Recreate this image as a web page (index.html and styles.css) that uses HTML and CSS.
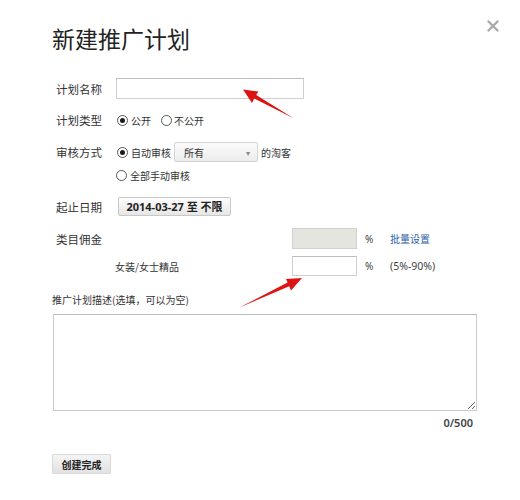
FILE: index.html
```html
<!DOCTYPE html>
<html lang="zh-CN">
<head>
<meta charset="utf-8">
<title>新建推广计划</title>
<link rel="stylesheet" href="styles.css">
</head>
<body>
<div class="dialog">
  <h1 class="title">新建推广计划</h1>
  <button class="close" type="button" aria-label="关闭">
    <svg width="12" height="12" viewBox="0 0 12 12"><path d="M1.5 1.5 L10.5 10.5 M10.5 1.5 L1.5 10.5" stroke="#a9a9a9" stroke-width="2.4" stroke-linecap="round"/></svg>
  </button>

  <div class="form">
    <div class="row row-name">
      <span class="label">计划名称</span>
      <input class="text-input name-input" type="text">
    </div>

    <div class="row row-type">
      <span class="label">计划类型</span>
      <span class="radio checked"></span><span class="opt">公开</span>
      <span class="radio second"></span><span class="opt opt-tight">不公开</span>
    </div>

    <div class="row row-audit">
      <span class="label">审核方式</span>
      <span class="radio checked"></span><span class="opt">自动审核</span>
      <span class="select"><span>所有</span><span class="caret">▾</span></span>
      <span class="opt after-select">的淘客</span>
    </div>
    <div class="row row-manual">
      <span class="radio"></span><span class="opt">全部手动审核</span>
    </div>

    <div class="row row-date">
      <span class="label">起止日期</span>
      <button class="date-btn" type="button">2014-03-27 至 不限</button>
    </div>

    <div class="cat-grid">
      <span class="label">类目佣金</span>
      <input class="text-input pct-input disabled" type="text" disabled>
      <span class="pct">%</span>
      <a class="link" href="#">批量设置</a>

      <span class="sub-label">女装/女士精品</span>
      <input class="text-input pct-input" type="text">
      <span class="pct">%</span>
      <span class="range">(5%-90%)</span>
    </div>
  </div>

  <div class="desc-label">推广计划描述(选填，可以为空)</div>
  <textarea class="desc"></textarea>
  <div class="counter">0/500</div>

  <button class="create-btn" type="button">创建完成</button>

  <svg class="arrows" width="520" height="500" viewBox="0 0 520 500">
    <polygon points="243,89.5 258.5,91.5 256.2,95.1 294,118.5 254.2,98.5 252,103" fill="#dd1414"/>
    <polygon points="302,278 286,279 287.6,282.6 239.5,307.5 289.2,286.2 291,290.5" fill="#dd1414"/>
  </svg>
</div>
</body>
</html>
```

FILE: styles.css
```css
* { box-sizing: border-box; }

body {
  margin: 0;
  background: #ffffff;
  font-family: "Noto Sans", "Noto Sans CJK SC", sans-serif;
  color: #333333;
}

.dialog {
  position: relative;
  width: 520px;
  height: 500px;
  padding: 26px 0 0 52px;
  display: flex;
  flex-direction: column;
  align-items: flex-start;
}

.title {
  margin: 0;
  font-family: "Noto Sans CJK SC", sans-serif;
  font-size: 23px;
  line-height: 24px;
  font-weight: 400;
  color: #222222;
}

.close {
  position: absolute;
  top: 20px;
  right: 21px;
  width: 12px;
  height: 12px;
  padding: 0;
  border: 0;
  background: none;
  display: flex;
}

.form {
  margin-left: 4px;
  display: flex;
  flex-direction: column;
}

.row {
  display: flex;
  align-items: center;
}

.label {
  width: 60px;
  flex: 0 0 60px;
  font-family: "Noto Sans CJK SC", sans-serif;
  font-size: 11.5px;
  color: #333333;
}

.opt {
  font-family: "Noto Sans CJK SC", sans-serif;
  font-size: 10px;
  color: #333333;
  margin-left: 3px;
}

.opt-tight { margin-left: 2px; }

.row-name { margin-top: 28px; height: 21px; }
.row-type { margin-top: 11px; height: 20px; }
.row-audit { margin-top: 12px; height: 20px; }
.row-manual { margin-top: 5px; height: 16px; padding-left: 60px; }
.row-date { margin-top: 14px; height: 19px; }

.text-input {
  height: 21px;
  border: 1px solid #cfcfcf;
  border-top-color: #bdbdbd;
  background: #ffffff;
  padding: 0 4px;
  font-size: 11px;
}

.name-input { width: 188px; }

.radio {
  position: relative;
  width: 11px;
  height: 11px;
  margin-left: 1px;
  border: 1px solid #555555;
  border-radius: 50%;
  background: #ffffff;
  flex: 0 0 11px;
}

.radio.second { margin-left: 10px; }
.row-manual .radio { margin-left: 0; }

.radio.checked::after {
  content: "";
  position: absolute;
  left: 2px;
  top: 2px;
  width: 5px;
  height: 5px;
  border-radius: 50%;
  background: #1a1a1a;
}

.select {
  width: 84px;
  height: 20px;
  margin-left: 3px;
  padding: 0 7px 0 9px;
  border: 1px solid #d4d4d4;
  border-radius: 2px;
  background: linear-gradient(#fbfbfb, #ececec);
  display: flex;
  align-items: center;
  justify-content: space-between;
  font-family: "Noto Sans CJK SC", sans-serif;
  font-size: 10px;
  color: #333333;
}

.caret {
  font-size: 8px;
  color: #888888;
}

.after-select { margin-left: 3px; }

.date-btn {
  width: 113px;
  height: 19px;
  margin-left: 2px;
  padding: 0;
  border: 1px solid #c8c8c8;
  border-radius: 2px;
  background: linear-gradient(#fdfdfd, #e6e6e6);
  font-family: "Noto Sans", "Noto Sans CJK SC", sans-serif;
  font-size: 11px;
  font-weight: 700;
  color: #222222;
  line-height: 17px;
}

.cat-grid {
  margin-top: 12px;
  display: grid;
  grid-template-columns: 60px 176px 65px 33px auto;
  grid-template-rows: 21px 20px;
  row-gap: 7px;
  align-items: center;
}

.cat-grid .label { grid-column: 1; }
.cat-grid .pct-input { grid-column: 3; width: 65px; height: 100%; }
.cat-grid .sub-label {
  grid-column: 2;
  margin-left: -1px;
  font-family: "Noto Sans CJK SC", sans-serif;
  font-size: 10px;
  color: #333333;
}

.pct-input.disabled {
  background: #e5e5df;
  border-color: #d2d2cc;
}

.pct {
  padding-left: 8px;
  font-size: 10px;
  color: #444444;
}

.link {
  font-family: "Noto Sans CJK SC", sans-serif;
  font-size: 10px;
  color: #2c62a8;
  text-decoration: none;
}

.range {
  font-size: 10.5px;
  color: #444444;
}

.desc-label {
  margin-top: 16px;
  height: 16px;
  line-height: 16px;
  font-family: "Noto Sans CJK SC", sans-serif;
  font-size: 10px;
  color: #333333;
}

.desc {
  margin: 6px 0 0 1px;
  width: 424px;
  height: 97px;
  border: 1px solid #cccccc;
  border-top-color: #bcbcbc;
  resize: both;
  display: block;
}

.counter {
  margin-top: 4px;
  width: 421px;
  height: 16px;
  line-height: 16px;
  text-align: right;
  font-size: 11px;
  font-weight: 600;
  color: #444444;
}

.create-btn {
  margin-top: 23px;
  width: 59px;
  height: 20px;
  padding: 0;
  border: 1px solid #dadada;
  border-radius: 1px;
  background: linear-gradient(#f4f4f4, #e2e2e2);
  font-family: "Noto Sans CJK SC", sans-serif;
  font-size: 10px;
  font-weight: 700;
  color: #222222;
}

.arrows {
  position: absolute;
  top: 0;
  left: 0;
  pointer-events: none;
}
```
